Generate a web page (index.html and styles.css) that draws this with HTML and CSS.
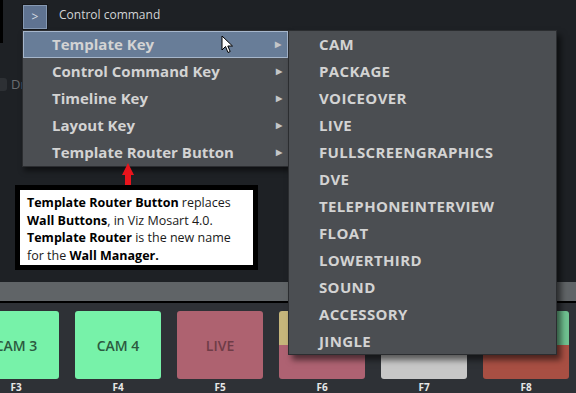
FILE: index.html
```html
<!DOCTYPE html>
<html lang="en">
<head>
    <meta charset="UTF-8">
    <meta name="viewport" content="width=device-width, initial-scale=1.0">
    <title>Template Router Button</title>
    <link rel="stylesheet" href="styles.css">
</head>
<body>

    <div class="screen">
        <!-- top command row -->
        <div class="top-row">
            <div class="edge"></div>
            <button class="cmd-btn">&gt;</button>
            <span class="cmd-label">Control command</span>
        </div>

        <div class="option-row">
            <span class="check"></span>
            <span class="option-label">Drag</span>
        </div>

        <div class="spacer"></div>

        <div class="grey-bar"></div>

        <!-- key buttons -->
        <div class="keys">
            <div class="key">
                <div class="pad green">CAM 3</div>
                <div class="fkey">F3</div>
            </div>
            <div class="key">
                <div class="pad green">CAM 4</div>
                <div class="fkey">F4</div>
            </div>
            <div class="key">
                <div class="pad live">LIVE</div>
                <div class="fkey">F5</div>
            </div>
            <div class="key">
                <div class="pad split"><span class="top yellow"></span><span class="bottom pink"></span></div>
                <div class="fkey">F6</div>
            </div>
            <div class="key">
                <div class="pad white"></div>
                <div class="fkey">F7</div>
            </div>
            <div class="key">
                <div class="pad split"><span class="top mint"></span><span class="bottom brick"></span></div>
                <div class="fkey">F8</div>
            </div>
        </div>

        <!-- context menu -->
        <ul class="menu">
            <li class="active">Template Key <span class="more">&#9654;</span></li>
            <li>Control Command Key <span class="more">&#9654;</span></li>
            <li>Timeline Key <span class="more">&#9654;</span></li>
            <li>Layout Key <span class="more">&#9654;</span></li>
            <li>Template Router Button <span class="more">&#9654;</span></li>
        </ul>

        <ul class="submenu">
            <li>CAM</li>
            <li>PACKAGE</li>
            <li>VOICEOVER</li>
            <li>LIVE</li>
            <li>FULLSCREENGRAPHICS</li>
            <li>DVE</li>
            <li>TELEPHONEINTERVIEW</li>
            <li>FLOAT</li>
            <li>LOWERTHIRD</li>
            <li>SOUND</li>
            <li>ACCESSORY</li>
            <li>JINGLE</li>
        </ul>

        <svg class="cursor" width="13" height="19" viewBox="0 0 13 19">
            <path d="M1 1 L1 15 L4.5 11.5 L7 17.5 L9.2 16.5 L6.8 11 L11.5 11 Z" fill="#fff" stroke="#000" stroke-width="1"/>
        </svg>

        <!-- annotation -->
        <svg class="red-arrow" width="14" height="34" viewBox="0 0 14 34">
            <path d="M7 0 L13 12 L10 12 L10 34 L4 34 L4 12 L1 12 Z" fill="#e8141c"/>
        </svg>

        <div class="note">
            <b>Template Router Button</b> replaces <b>Wall Buttons</b>, in Viz Mosart 4.0.
            <b>Template Router</b> is the new name for the <b>Wall Manager.</b>
        </div>
    </div>

</body>
</html>
```

FILE: styles.css
```css
body {
    margin: 0;
    background: #1e2125;
    font-family: "Open Sans", Arial, sans-serif;
    overflow: hidden;
}
.screen {
    position: relative;
    width: 576px;
    height: 393px;
    display: flex;
    flex-direction: column;
}
.top-row {
    display: flex;
    align-items: flex-start;
    height: 43px;
}
.edge {
    width: 3px;
    height: 43px;
    background: #000;
}
.cmd-btn {
    margin: 5px 0 0 20px;
    width: 24px;
    height: 24px;
    padding: 0;
    background: #5f7391;
    border: 1px solid #8699b3;
    outline: 1px solid #15171a;
    color: #d8dde4;
    font-family: "Open Sans", sans-serif;
    font-size: 12px;
    line-height: 20px;
}
.cmd-label {
    margin: 7px 0 0 12px;
    color: #d2d4d6;
    font-size: 12px;
    line-height: 16px;
}
.option-row {
    display: flex;
    align-items: center;
    height: 14px;
    margin-top: 34px;
}
.check {
    width: 7px;
    height: 13px;
    background: #2d3034;
    border-radius: 0 3px 3px 0;
}
.option-label {
    margin-left: 4px;
    color: #6a6d71;
    font-size: 13px;
}
.spacer {
    flex: 1;
}
.grey-bar {
    height: 19px;
    background: #606467;
    border-bottom: 2px solid #000;
}
.keys {
    height: 90px;
    background: #2e3136;
    display: flex;
    gap: 16px;
    padding-top: 8px;
    margin-left: -27px;
    box-sizing: border-box;
}
.key {
    width: 86px;
    flex: none;
}
.pad {
    height: 68px;
    border-radius: 3px;
    display: flex;
    align-items: center;
    justify-content: center;
    font-size: 14px;
    font-weight: 600;
    overflow: hidden;
}
.green {
    background: #77f2a9;
    color: #2c5a40;
}
.live {
    background: #ae6270;
    color: #6f3c47;
}
.white {
    background: #c7c7c7;
}
.split {
    flex-direction: column;
}
.split span {
    display: block;
    width: 100%;
}
.split .top {
    height: 34px;
}
.split .bottom {
    flex: 1;
}
.yellow { background: #c6b67b; }
.pink { background: #ae6272; }
.mint { background: #70c291; }
.brick { background: #a84f43; }
.fkey {
    text-align: center;
    color: #e6e7e8;
    font-size: 10px;
    font-weight: 700;
    line-height: 14px;
    margin-top: 1px;
}
.menu, .submenu {
    position: absolute;
    margin: 0;
    padding: 0;
    list-style: none;
    top: 30px;
    background: #4b4e52;
    border: 1px solid #2b2d30;
    box-sizing: border-box;
    font-size: 15px;
    font-weight: 700;
    color: #d3d3d3;
}
.menu {
    left: 22px;
    width: 267px;
    height: 137px;
    box-shadow: 2px 4px 5px rgba(0, 0, 0, 0.5);
}
.menu li {
    position: relative;
    height: 27px;
    line-height: 26px;
    padding-left: 29px;
    box-sizing: border-box;
}
.menu li.active {
    background: #687d98;
    border: 1px solid #a6b6cb;
    padding-left: 28px;
    line-height: 24px;
}
.more {
    position: absolute;
    right: 6px;
    top: 0;
    font-size: 8px;
    color: #c5c6c8;
}
.submenu {
    left: 288px;
    width: 269px;
    height: 325px;
    letter-spacing: 0.35px;
    box-shadow: 4px 5px 6px rgba(0, 0, 0, 0.55);
}
.submenu li {
    height: 27px;
    line-height: 26px;
    padding-left: 30px;
}
.cursor {
    position: absolute;
    left: 221px;
    top: 35px;
}
.red-arrow {
    position: absolute;
    left: 121px;
    top: 163px;
}
.note {
    position: absolute;
    left: 15px;
    top: 185px;
    width: 243px;
    height: 85px;
    box-sizing: border-box;
    background: #fff;
    border: 5px solid #000;
    padding: 4px 6px 0 7px;
    font-family: "Open Sans", sans-serif;
    font-size: 12.5px;
    line-height: 17.5px;
    color: #1a1a1a;
}
.note b {
    font-weight: 700;
    color: #000;
}
```
